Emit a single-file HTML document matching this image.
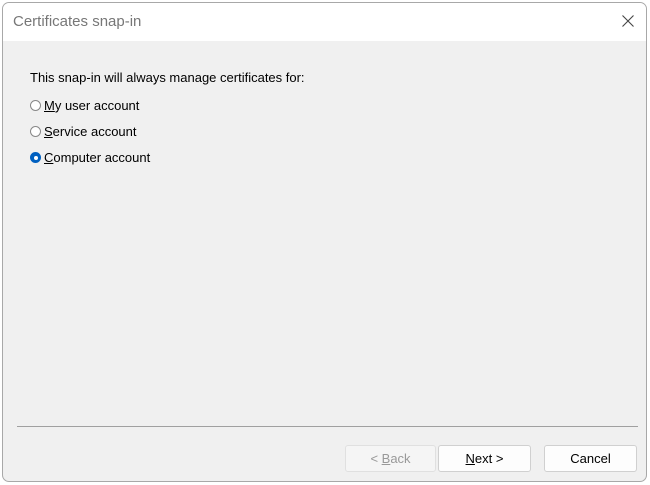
<html><head><style>
body{margin:0;width:650px;height:485px;background:#fff;position:relative;overflow:hidden;font-family:"Liberation Sans",sans-serif;}
.win{position:absolute;left:2px;top:2px;width:645px;height:480px;background:#f0f0f0;border:1px solid #a8a8a8;border-radius:7px;overflow:hidden;box-sizing:border-box}
.title{height:38px;background:#fff;position:relative}
.title span{position:absolute;left:10px;top:10px;font-size:15px;color:#777}
.x{position:absolute;right:12px;top:12px}
.t{position:absolute;font-size:13px;color:#000}
.r{position:absolute;width:9px;height:9px;border:1px solid #888;border-radius:50%;background:#fff}
.sel{border:1px solid #0060c0;background:#0060c0}
.sel:after{content:"";position:absolute;left:2.5px;top:2.5px;width:4px;height:4px;border-radius:50%;background:#fff}
.sep{position:absolute;left:14px;top:423px;width:621px;height:1px;background:#a0a0a0}
.b{position:absolute;top:442px;height:27px;width:91px;background:#fdfdfd;border:1px solid #d0d0d0;border-radius:3px;box-sizing:border-box;text-align:center;line-height:25px;font-size:13px}
</style></head><body>
<div class="win">
<div class="title"><span>Certificates snap-in</span><svg class="x" width="12" height="12" viewBox="0 0 12 12"><path d="M0.5 0.5L11.5 11.5M11.5 0.5L0.5 11.5" stroke="#444" stroke-width="1.1"/></svg></div>
<div class="t" style="left:27px;top:67px">This snap-in will always manage certificates for:</div>
<div class="r" style="left:27px;top:97px"></div><div class="t" style="left:41px;top:95px"><u>M</u>y user account</div>
<div class="r" style="left:27px;top:123px"></div><div class="t" style="left:41px;top:121px"><u>S</u>ervice account</div>
<div class="r sel" style="left:27px;top:149px"></div><div class="t" style="left:41px;top:147px"><u>C</u>omputer account</div>
<div class="sep"></div>
<div class="b" style="left:342px;background:#f5f5f5;border-color:#e0e0e0;color:#999">&lt; <u>B</u>ack</div>
<div class="b" style="left:435px;width:93px"><u>N</u>ext &gt;</div>
<div class="b" style="left:541px;width:93px">Cancel</div>
</div>
</body></html>
